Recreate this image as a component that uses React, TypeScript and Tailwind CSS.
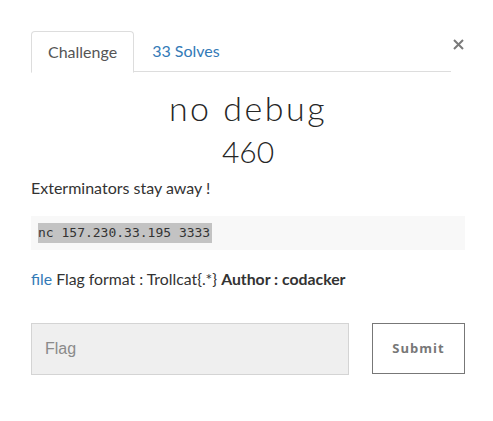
export default function App() {
  return (
    <div className="w-[493px] h-[421px] bg-white pl-[31px] pr-[28px] pt-[31px] font-['Lato','Noto_Sans',sans-serif] text-[#333]">
      {/* tabs + close */}
      <div className="flex items-start">
        <div className="flex flex-1 border-b border-[#ddd] h-[41px]">
          <div className="h-[42px] px-4 border border-[#ddd] border-b-white rounded-t-[4px] bg-white text-[16px] leading-[40px] text-[#555]">
            Challenge
          </div>
          <div className="h-[41px] px-4 ml-[2px] text-[16px] leading-[40px] text-[#337ab7]">33 Solves</div>
        </div>
        <button className="w-[14px] h-[14px] mt-[6px] flex items-center justify-center" aria-label="Close">
          <svg width="11" height="11" viewBox="0 0 11 11">
            <path d="M1 1L10 10M10 1L1 10" stroke="#7a7a7a" strokeWidth="2" />
          </svg>
        </button>
      </div>

      <h1 className="mt-[16px] text-center text-[34px] leading-[40px] font-light tracking-[2.5px] text-[#262626]">no debug</h1>
      <h2 className="mt-[3px] text-center text-[30px] leading-[40px] font-light text-[#262626]">460</h2>

      <p className="mt-[7px] text-[16px] leading-[20px] text-[#333]">Exterminators stay away !</p>

      <div className="mt-[18px] h-[34px] flex items-center bg-[#f8f8f8] pl-[7px]">
        <span className="block bg-[#c3c3c3] pr-[2px] font-['DejaVu_Sans_Mono',monospace] text-[13px] leading-[20px] text-[#333]">
          nc 157.230.33.195 3333
        </span>
      </div>

      <p className="mt-[19px] text-[15.8px] leading-[20px] text-[#333]">
        <a className="text-[#337ab7]">file</a> Flag format : Trollcat{'{.*}'} <b>Author : codacker</b>
      </p>

      <div className="mt-[34px] flex items-start gap-[23px]">
        <input
          placeholder="Flag"
          className="w-[318px] h-[52px] bg-[#efefef] border border-[#d4d4d4] px-[13px] text-[16px] font-['Liberation_Sans',sans-serif] placeholder:text-[#8a8a8a] outline-none"
        />
        <button className="w-[93px] h-[51px] border border-[#777] bg-white text-[13px] font-bold tracking-[1px] text-[#777] font-['Open_Sans',sans-serif]">
          Submit
        </button>
      </div>
    </div>
  );
}
